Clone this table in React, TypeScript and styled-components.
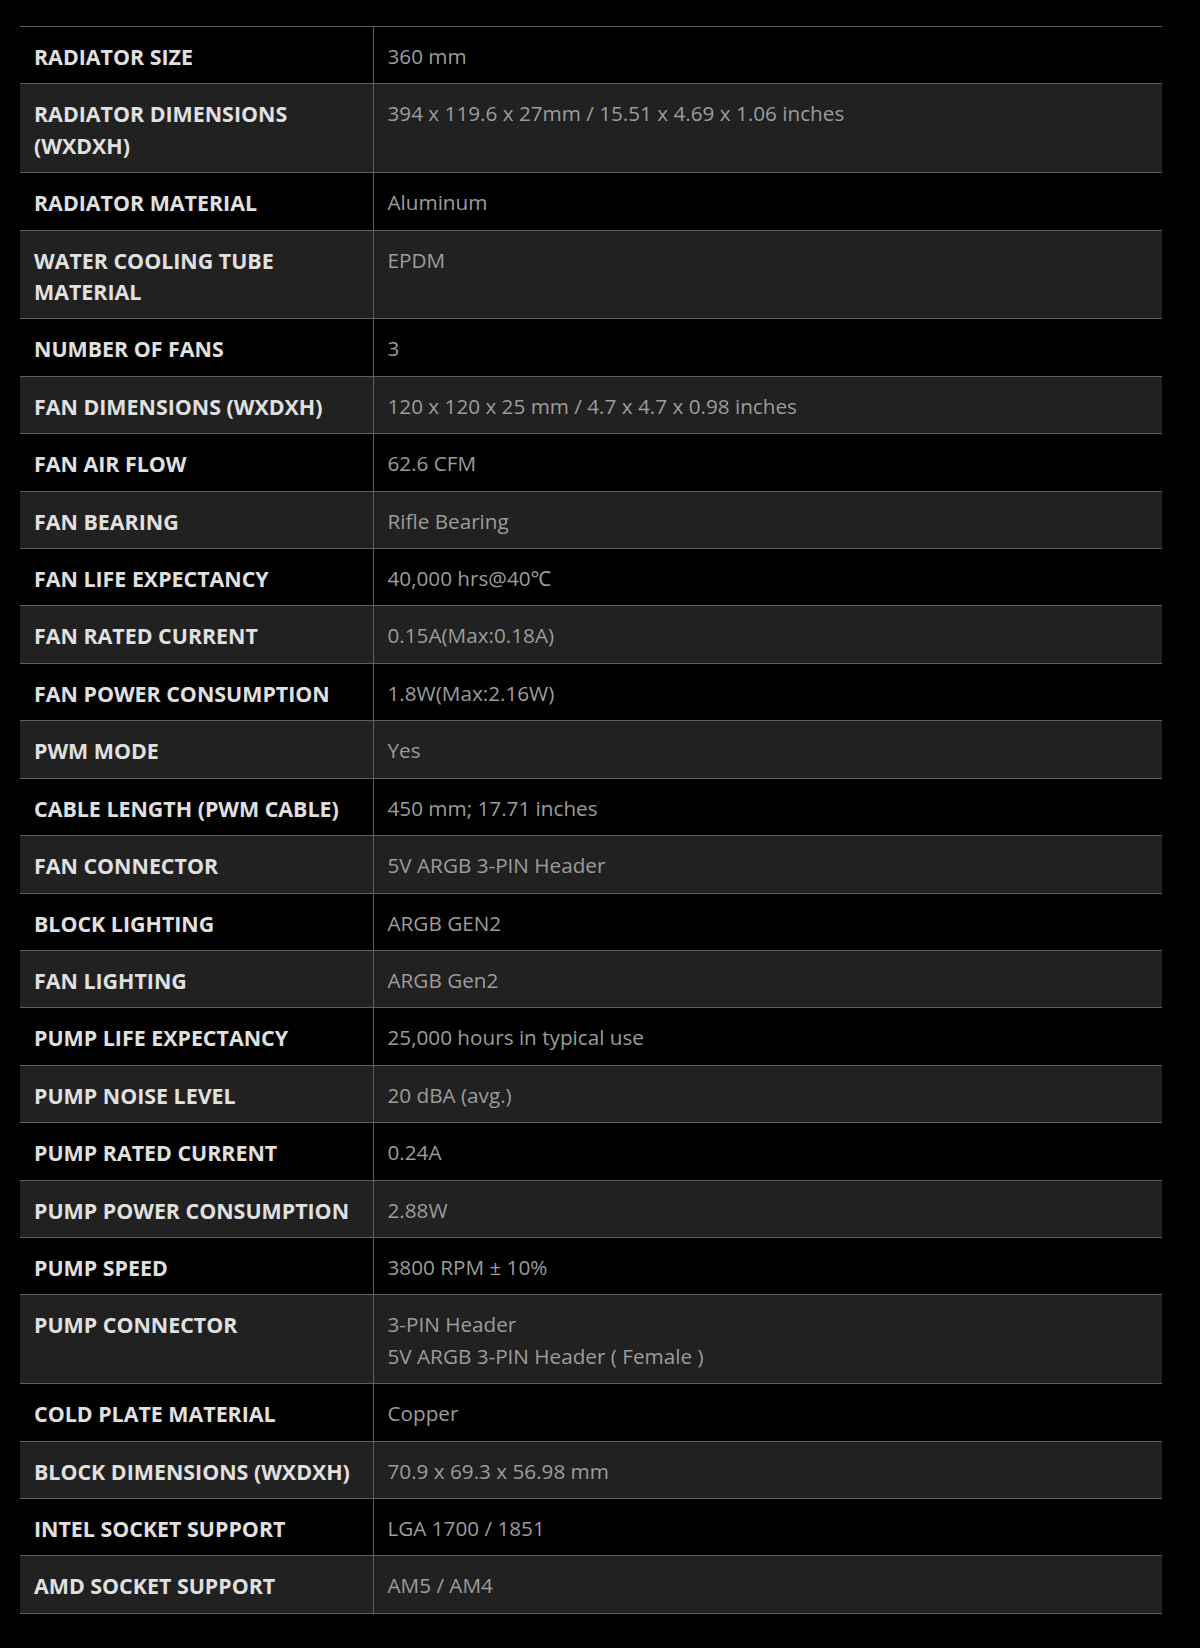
import React from 'react';
import styled, { createGlobalStyle } from 'styled-components';

const GlobalStyle = createGlobalStyle`
  html, body {
    margin: 0;
    padding: 0;
    background: #000;
  }
  body {
    font-family: 'Open Sans', 'Noto Sans', 'DejaVu Sans', sans-serif;
  }
`;

const Page = styled.div`
  min-height: 1648px;
  box-sizing: border-box;
  padding: 26px 38px 35px 20px;
  background: #000;
`;

const SpecTable = styled.table`
  width: 1142px;
  border-collapse: collapse;
  line-height: 31.4px;
`;

const Row = styled.tr<{ striped: boolean }>`
  background: ${({ striped }) => (striped ? '#212121' : '#000')};
  border-top: 1px solid #5e5e5e;
  &:last-child {
    border-bottom: 1px solid #5e5e5e;
  }
`;

const Label = styled.th`
  width: 353px;
  box-sizing: border-box;
  padding: 14px 14px 11px 14px;
  text-align: left;
  vertical-align: top;
  font-size: 21.4px;
  font-weight: 700;
  text-transform: uppercase;
  color: #e0e0e0;
`;

const Value = styled.td`
  padding: 14px 14px 11px 14px;
  vertical-align: top;
  font-size: 20.7px;
  font-weight: 400;
  color: #9c9c9c;
  border-left: 1px solid #5e5e5e;
`;

const specs: { label: string; value: string[] }[] = [
  { label: 'Radiator Size', value: ['360 mm'] },
  { label: 'Radiator Dimensions (WxDxH)', value: ['394 x 119.6 x 27mm / 15.51 x 4.69 x 1.06 inches'] },
  { label: 'Radiator Material', value: ['Aluminum'] },
  { label: 'Water Cooling Tube Material', value: ['EPDM'] },
  { label: 'Number of Fans', value: ['3'] },
  { label: 'Fan Dimensions (WxDxH)', value: ['120 x 120 x 25 mm / 4.7 x 4.7 x 0.98 inches'] },
  { label: 'Fan Air Flow', value: ['62.6 CFM'] },
  { label: 'Fan Bearing', value: ['Rifle Bearing'] },
  { label: 'Fan Life Expectancy', value: ['40,000 hrs@40℃'] },
  { label: 'Fan Rated Current', value: ['0.15A(Max:0.18A)'] },
  { label: 'Fan Power Consumption', value: ['1.8W(Max:2.16W)'] },
  { label: 'PWM Mode', value: ['Yes'] },
  { label: 'Cable Length (PWM Cable)', value: ['450 mm; 17.71 inches'] },
  { label: 'Fan Connector', value: ['5V ARGB 3-PIN Header'] },
  { label: 'Block Lighting', value: ['ARGB GEN2'] },
  { label: 'Fan Lighting', value: ['ARGB Gen2'] },
  { label: 'Pump Life Expectancy', value: ['25,000 hours in typical use'] },
  { label: 'Pump Noise Level', value: ['20 dBA (avg.)'] },
  { label: 'Pump Rated Current', value: ['0.24A'] },
  { label: 'Pump Power Consumption', value: ['2.88W'] },
  { label: 'Pump Speed', value: ['3800 RPM ± 10%'] },
  { label: 'Pump Connector', value: ['3-PIN Header', '5V ARGB 3-PIN Header ( Female )'] },
  { label: 'Cold Plate Material', value: ['Copper'] },
  { label: 'Block Dimensions (WxDxH)', value: ['70.9 x 69.3 x 56.98 mm'] },
  { label: 'Intel Socket Support', value: ['LGA 1700 / 1851'] },
  { label: 'AMD Socket Support', value: ['AM5 / AM4'] },
];

export default function App() {
  return (
    <Page>
      <GlobalStyle />
      <SpecTable>
        <tbody>
          {specs.map((s, i) => (
            <Row key={s.label} striped={i % 2 === 1}>
              <Label>{s.label}</Label>
              <Value>
                {s.value.map((line, j) => (
                  <React.Fragment key={j}>
                    {j > 0 && <br />}
                    {line}
                  </React.Fragment>
                ))}
              </Value>
            </Row>
          ))}
        </tbody>
      </SpecTable>
    </Page>
  );
}
